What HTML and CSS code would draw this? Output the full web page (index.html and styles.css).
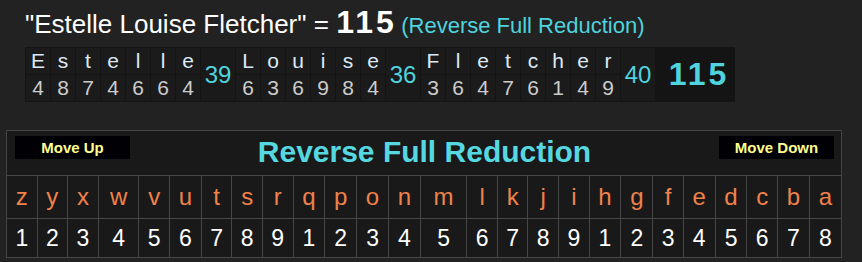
FILE: index.html
```html
<!DOCTYPE html>
<html>
<head>
<meta charset="utf-8">
<link rel="stylesheet" href="styles.css">
</head>
<body>
<div class="headline">
  <span class="name">"Estelle Louise Fletcher" = </span><span class="total">115</span> <span class="cipher">(Reverse Full Reduction)</span>
</div>
<table class="word">
  <tr>
    <td class="l">E</td><td class="l">s</td><td class="l">t</td><td class="l">e</td><td class="l">l</td><td class="l">l</td><td class="l">e</td>
    <td class="sub" rowspan="2">39</td>
    <td class="l">L</td><td class="l">o</td><td class="l">u</td><td class="l">i</td><td class="l">s</td><td class="l">e</td>
    <td class="sub" rowspan="2">36</td>
    <td class="l">F</td><td class="l">l</td><td class="l">e</td><td class="l">t</td><td class="l">c</td><td class="l">h</td><td class="l">e</td><td class="l">r</td>
    <td class="sub" rowspan="2">40</td>
    <td class="grand" rowspan="2">115</td>
  </tr>
  <tr>
    <td class="n">4</td><td class="n">8</td><td class="n">7</td><td class="n">4</td><td class="n">6</td><td class="n">6</td><td class="n">4</td>
    <td class="n">6</td><td class="n">3</td><td class="n">6</td><td class="n">9</td><td class="n">8</td><td class="n">4</td>
    <td class="n">3</td><td class="n">6</td><td class="n">4</td><td class="n">7</td><td class="n">6</td><td class="n">1</td><td class="n">4</td><td class="n">9</td>
  </tr>
</table>
<table class="chart">
  <tr>
    <td class="head" colspan="26">
      <div class="head-inner">
        <button class="btn up">Move Up</button>
        <div class="title">Reverse Full Reduction</div>
        <button class="btn down">Move Down</button>
      </div>
    </td>
  </tr>
  <tr class="letters">
    <td>z</td><td>y</td><td>x</td><td>w</td><td>v</td><td>u</td><td>t</td><td>s</td><td>r</td><td>q</td><td>p</td><td>o</td><td>n</td><td>m</td><td>l</td><td>k</td><td>j</td><td>i</td><td>h</td><td>g</td><td>f</td><td>e</td><td>d</td><td>c</td><td>b</td><td>a</td>
  </tr>
  <tr class="nums">
    <td>1</td><td>2</td><td>3</td><td>4</td><td>5</td><td>6</td><td>7</td><td>8</td><td>9</td><td>1</td><td>2</td><td>3</td><td>4</td><td>5</td><td>6</td><td>7</td><td>8</td><td>9</td><td>1</td><td>2</td><td>3</td><td>4</td><td>5</td><td>6</td><td>7</td><td>8</td>
  </tr>
</table>
</body>
</html>
```
FILE: styles.css
```css
html, body {
  margin: 0;
  padding: 0;
  background: #222222;
  font-family: "Liberation Sans", Arial, sans-serif;
}
body {
  width: 862px;
  height: 262px;
  overflow: hidden;
}
.headline {
  padding: 6px 0 0 25px;
  height: 41px;
  line-height: 32px;
  white-space: nowrap;
}
.name {
  color: #ffffff;
  font-size: 26px;
}
.total {
  color: #ffffff;
  font-size: 32px;
  font-weight: bold;
  letter-spacing: 3px;
}
.cipher {
  color: #4fd3dd;
  font-size: 22px;
}
.word {
  margin-left: 25px;
  border-collapse: collapse;
  background: #1b1b1b;
}
.word td {
  padding: 0;
  text-align: center;
}
.word .l, .word .n {
  width: 24px;
  border: 1px solid #141414;
  font-size: 21px;
  height: 26px;
  line-height: 24px;
}
.word .l {
  color: #dbe9f7;
}
.word .n {
  color: #cccccc;
}
.word .sub {
  width: 34px;
  background: #1a1a1a;
  color: #4fd3dd;
  font-size: 24px;
  border: 1px solid #141414;
}
.word .grand {
  width: 78px;
  background: #141414;
  color: #4fd3dd;
  font-size: 32px;
  font-weight: bold;
  letter-spacing: 3px;
  text-indent: 8px;
  border: 1px solid #141414;
}
.chart {
  margin: 28px 0 0 6px;
  width: 836px;
  border-collapse: collapse;
  background: #191919;
  border: 1px solid #464646;
}
.chart td {
  border: 1px solid #464646;
  padding: 0;
  text-align: center;
}
.chart .head {
  height: 44px;
  padding: 0;
  vertical-align: top;
}
.head-inner {
  display: grid;
  grid-template-columns: 1fr auto 1fr;
  align-items: start;
  padding: 5px 7px 0 8px;
}
.btn {
  width: 115px;
  height: 23px;
  background: #000005;
  border: none;
  color: #ffff8c;
  font-family: "Liberation Sans", Arial, sans-serif;
  font-weight: bold;
  font-size: 15px;
  padding: 0;
}
.btn.up { justify-self: start; }
.btn.down { justify-self: end; }
.title {
  color: #56d8e0;
  font-size: 30px;
  font-weight: bold;
  line-height: 34px;
  margin-top: -1px;
}
.letters td {
  height: 42px;
  color: #f0824a;
  font-size: 24px;
}
.nums td {
  height: 38px;
  color: #ffffff;
  font-size: 23px;
}
```
